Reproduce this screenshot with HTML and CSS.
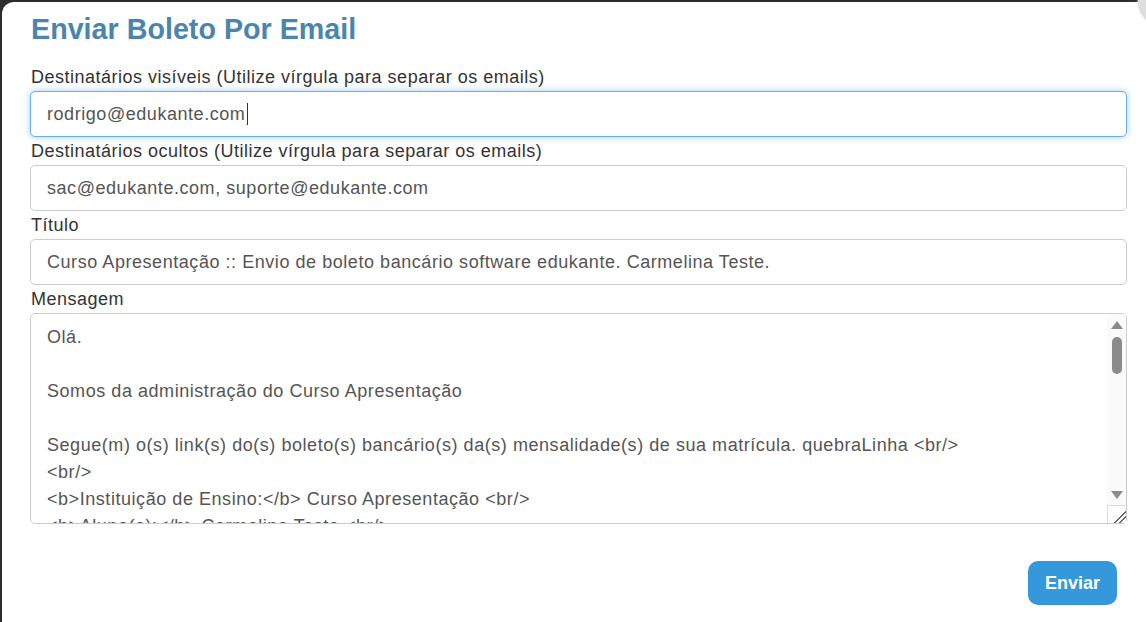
FILE: index.html
```html
<!DOCTYPE html>
<html lang="pt-BR">
    <head>
        <meta charset="utf-8">
        <title>Enviar Boleto Por Email</title>
        <meta name="viewport" content="width=device-width,initial-scale=1">
        <link rel="stylesheet" href="styles.css">
    </head>
    <body>
        <div class="modal">
            <span class="close-btn"></span>

            <h1 class="modal-title">Enviar Boleto Por Email</h1>

            <form class="mail-form">
                <div class="field">
                    <label for="para">Destinatários visíveis (Utilize vírgula para separar os emails)</label>
                    <div class="input-wrap">
                        <input id="para" class="focused" type="text" value="rodrigo@edukante.com">
                        <span class="caret"></span>
                    </div>
                </div>

                <div class="field">
                    <label for="cco">Destinatários ocultos (Utilize vírgula para separar os emails)</label>
                    <input id="cco" type="text" value="sac@edukante.com, suporte@edukante.com">
                </div>

                <div class="field">
                    <label for="titulo">Título</label>
                    <input id="titulo" type="text" value="Curso Apresentação :: Envio de boleto bancário software edukante. Carmelina Teste.">
                </div>

                <div class="field">
                    <label for="mensagem">Mensagem</label>
                    <div class="textarea-wrap">
                        <textarea id="mensagem">Olá.

Somos da administração do Curso Apresentação

Segue(m) o(s) link(s) do(s) boleto(s) bancário(s) da(s) mensalidade(s) de sua matrícula. quebraLinha &lt;br/&gt;
&lt;br/&gt;
&lt;b&gt;Instituição de Ensino:&lt;/b&gt; Curso Apresentação &lt;br/&gt;
&lt;b&gt;Aluno(a):&lt;/b&gt; Carmelina Teste &lt;br/&gt;
&lt;b&gt;Curso:&lt;/b&gt; Curso Apresentação &lt;br/&gt;
&lt;br/&gt;
Atenciosamente,
Curso Apresentação</textarea>

                        <div class="fake-scroll">
                            <span class="arrow up"></span>
                            <span class="thumb"></span>
                            <span class="arrow down"></span>
                            <span class="resizer"></span>
                        </div>
                    </div>
                </div>

                <div class="form-footer">
                    <button type="button" class="send-btn">Enviar</button>
                </div>
            </form>
        </div>
    </body>
</html>
```

FILE: styles.css
```css
html, body {
    height: 100%;
}
body {
    margin: 0;
    background-color: #2d2d2d;
    font-family: "Liberation Sans", Arial, sans-serif;
    overflow: hidden;
}

.modal {
    position: relative;
    margin: 2px 0 0 2px;
    min-height: 640px;
    padding: 11px 19px 0 28px;
    background-color: #fff;
    border-radius: 12px 0 0 0;
}

.close-btn {
    position: absolute;
    top: -24px;
    right: -40px;
    width: 48px;
    height: 48px;
    border-radius: 50%;
    background-color: #dedede;
    box-shadow: 0 0 3px #eee;
}

.modal-title {
    margin: 0 0 0 1px;
    font-size: 28.7px;
    line-height: 32px;
    color: #4a85ad;
}

.mail-form {
    margin-top: 20px;
}

.field label {
    display: block;
    margin: 2px 0 2px 1px;
    font-size: 18px;
    line-height: 24px;
    letter-spacing: 0.5px;
    color: #333;
}
.field input,
.field textarea {
    display: block;
    box-sizing: border-box;
    width: 100%;
    margin: 0;
    border: 1px solid #ccc;
    border-radius: 5px;
    font-family: "Liberation Sans", Arial, sans-serif;
    font-size: 18px;
    letter-spacing: 0.55px;
    color: #555;
    background-color: #fff;
    outline: none;
}
.field input {
    height: 46px;
    padding: 10px 16px;
    line-height: 24px;
}
.field input.focused {
    border-color: #66afe9;
    box-shadow: 0 0 7px rgba(102, 175, 233, 0.6);
}

.input-wrap {
    position: relative;
}
.caret {
    position: absolute;
    top: 12px;
    left: 217px;
    width: 1px;
    height: 22px;
    background-color: #333;
}

.textarea-wrap {
    position: relative;
}
.field textarea {
    height: 211px;
    padding: 10px 30px 8px 16px;
    line-height: 27px;
    resize: none;
    overflow: hidden;
}

/* barra de rolagem desenhada por cima do textarea */
.fake-scroll {
    position: absolute;
    top: 1px;
    right: 1px;
    bottom: 1px;
    width: 19px;
    display: flex;
    flex-direction: column;
    align-items: center;
    background-color: #fafafa;
    border-radius: 0 4px 4px 0;
}
.fake-scroll .arrow {
    width: 0;
    height: 0;
    border-left: 6px solid transparent;
    border-right: 6px solid transparent;
}
.fake-scroll .arrow.up {
    margin-top: 7px;
    border-bottom: 8px solid #8b8b8b;
}
.fake-scroll .arrow.down {
    margin-top: auto;
    margin-bottom: 6px;
    border-top: 8px solid #8b8b8b;
}
.fake-scroll .thumb {
    width: 10px;
    height: 37px;
    margin-top: 8px;
    border-radius: 5px;
    background-color: #8b8b8b;
}
.fake-scroll .resizer {
    box-sizing: border-box;
    width: 19px;
    height: 18px;
    border-top: 1px solid #ddd;
    border-left: 1px solid #ddd;
    background-color: #fff;
    background-image: linear-gradient(135deg, transparent 64%, #666 64%, #666 69%, transparent 69%, transparent 79%, #666 79%, #666 84%, transparent 84%);
}

.form-footer {
    display: flex;
    justify-content: flex-end;
    margin-top: 37px;
    padding-right: 10px;
}
.send-btn {
    width: 89px;
    height: 44px;
    border: none;
    border-radius: 10px;
    background-color: #3498db;
    color: #fff;
    font-family: "Liberation Sans", Arial, sans-serif;
    font-size: 18px;
    font-weight: bold;
}
```
